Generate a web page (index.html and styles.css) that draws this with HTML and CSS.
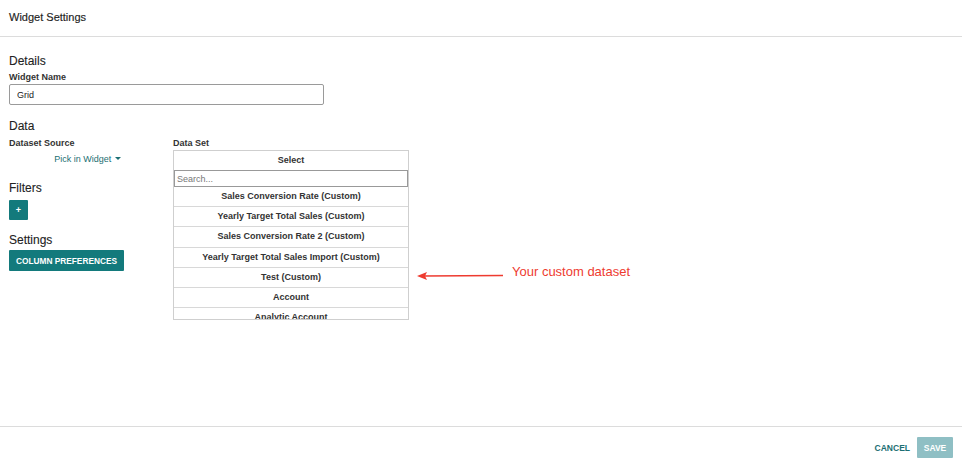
FILE: index.html
```html
<!DOCTYPE html>
<html>
<head>
<meta charset="utf-8">
<link rel="stylesheet" href="styles.css">
</head>
<body>
<div class="page">
  <header class="topbar"><span class="title">Widget Settings</span></header>
  <main class="content">
    <h2 class="section-title first">Details</h2>
    <div class="label">Widget Name</div>
    <input class="text-input" type="text" value="Grid">

    <h2 class="section-title data-title">Data</h2>
    <div class="data-row">
      <div class="left-col">
        <div class="label">Dataset Source</div>
        <div class="picker">Pick in Widget <span class="caret"></span></div>

        <h2 class="section-title filters-title">Filters</h2>
        <button class="btn-plus">+</button>

        <h2 class="section-title settings-title">Settings</h2>
        <button class="btn-primary">COLUMN PREFERENCES</button>
      </div>
      <div class="right-col">
        <div class="label">Data Set</div>
        <div class="dropdown">
          <div class="dd-head">Select</div>
          <input class="dd-search" type="text" placeholder="Search...">
          <div class="dd-item">Sales Conversion Rate (Custom)</div>
          <div class="dd-item">Yearly Target Total Sales (Custom)</div>
          <div class="dd-item">Sales Conversion Rate 2 (Custom)</div>
          <div class="dd-item">Yearly Target Total Sales Import (Custom)</div>
          <div class="dd-item">Test (Custom)</div>
          <div class="dd-item">Account</div>
          <div class="dd-item">Analytic Account</div>
        </div>
        <div class="annotation">
          <svg class="arrow" width="90" height="10" viewBox="0 0 90 10">
            <line x1="6" y1="5" x2="86" y2="4.5" stroke="#ee3b30" stroke-width="1.6"/>
            <polygon points="0,5 10,1 8,5 10,9" fill="#ee3b30"/>
          </svg>
          <span class="note">Your custom dataset</span>
        </div>
      </div>
    </div>
  </main>
  <footer class="footer">
    <button class="btn-link">CANCEL</button>
    <button class="btn-save">SAVE</button>
  </footer>
</div>
</body>
</html>
```
FILE: styles.css
```css
* { box-sizing: border-box; }
html, body { margin: 0; padding: 0; }
body {
  font-family: "Liberation Sans", Arial, Helvetica, sans-serif;
  color: #333;
  background: #fff;
}
.page {
  height: 468px;
  display: flex;
  flex-direction: column;
}
.topbar {
  height: 37px;
  border-bottom: 1px solid #dcdcdc;
  padding: 11px 9px 0;
}
.title {
  font-size: 11px;
  line-height: 13px;
  font-weight: 500;
  color: #222;
  display: block;
  -webkit-text-stroke: 0.15px #222;
}
.content {
  flex: 1;
  padding: 0 9px;
}
.section-title {
  margin: 0;
  font-size: 12px;
  line-height: 14px;
  font-weight: normal;
  color: #222;
  -webkit-text-stroke: 0.1px #222;
}
.section-title.first { margin-top: 17px; margin-bottom: 4px; }
.section-title.data-title { margin-top: 14px; margin-bottom: 5px; }
.label {
  font-size: 9px;
  line-height: 11px;
  font-weight: bold;
  color: #333;
}
.text-input {
  display: block;
  margin-top: 1px;
  width: 315px;
  height: 21px;
  border: 1px solid #9a9a9a;
  border-radius: 2px;
  padding: 0 7px;
  font-family: inherit;
  font-size: 9px;
  color: #222;
  outline: none;
}
.data-row {
  display: flex;
  position: relative;
}
.left-col {
  width: 164px;
  display: flex;
  flex-direction: column;
  align-items: flex-start;
}
.picker {
  margin-top: 4px;
  width: 157px;
  text-align: center;
  font-size: 9px;
  line-height: 12px;
  color: #1c6f73;
}
.caret {
  display: inline-block;
  width: 0;
  height: 0;
  border-left: 3px solid transparent;
  border-right: 3px solid transparent;
  border-top: 3px solid #1c6f73;
  vertical-align: 2px;
  margin-left: 1px;
}
.section-title.filters-title { margin-top: 16px; margin-bottom: 5px; }
.section-title.settings-title { margin-top: 13px; margin-bottom: 3px; }
.btn-plus {
  width: 19px;
  height: 20px;
  border: none;
  border-radius: 1px;
  background: #137a7c;
  color: #fff;
  font-family: inherit;
  font-size: 9px;
  font-weight: bold;
  padding: 0;
  line-height: 20px;
}
.btn-primary {
  height: 21px;
  border: none;
  border-radius: 1px;
  background: #137a7c;
  color: #fff;
  font-family: inherit;
  font-size: 8.3px;
  font-weight: bold;
  padding: 0 7px;
  width: 115px;
}
.right-col {
  position: relative;
  width: 236px;
}
.dropdown {
  margin-top: 1px;
  width: 236px;
  height: 170px;
  overflow: hidden;
  border: 1px solid #cfcfcf;
}
.dd-head {
  height: 19px;
  line-height: 18px;
  text-align: center;
  font-size: 9px;
  font-weight: bold;
  color: #333;
}
.dd-search {
  display: block;
  width: 100%;
  height: 17px;
  border: 1px solid #999;
  padding: 0 2px;
  margin: 0;
  font-family: inherit;
  font-size: 9px;
  outline: none;
}
.dd-search::placeholder { color: #777; }
.dd-item {
  height: 20.2px;
  line-height: 19px;
  text-align: center;
  font-size: 9px;
  font-weight: bold;
  color: #333;
  border-bottom: 1px solid #d8d8d8;
}
.annotation {
  position: absolute;
  left: 244px;
  top: 126px;
  display: flex;
  align-items: flex-start;
  white-space: nowrap;
}
.arrow { display: block; margin-top: 7px; }
.note {
  margin-left: 5px;
  font-size: 13px;
  line-height: 16px;
  color: #ee3b30;
}
.footer {
  border-top: 1px solid #dcdcdc;
  padding: 10px 9px 10px;
  display: flex;
  justify-content: flex-end;
  align-items: center;
  gap: 7px;
}
.btn-link {
  background: none;
  border: none;
  padding: 0;
  font-family: inherit;
  font-size: 8.5px;
  font-weight: bold;
  color: #1c6f73;
  height: 21px;
}
.btn-save {
  width: 36px;
  height: 21px;
  border: none;
  border-radius: 1px;
  background: #8fbfc4;
  color: #fff;
  font-family: inherit;
  font-size: 8.5px;
  font-weight: bold;
  padding: 0;
}
```
